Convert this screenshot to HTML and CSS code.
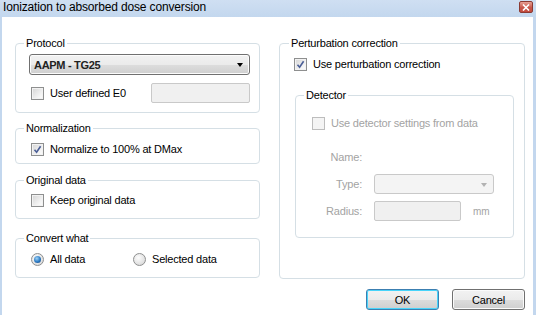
FILE: index.html
```html
<!DOCTYPE html>
<html>
<head>
<meta charset="utf-8">
<link rel="stylesheet" href="styles.css">
</head>
<body>
<div class="window">
  <header class="titlebar">
    <span class="title">Ionization to absorbed dose conversion</span>
    <span class="close"><svg width="8" height="7" viewBox="0 0 8 7"><path d="M1 0.5 L7 6.5 M7 0.5 L1 6.5" stroke="#fff" stroke-width="1.6"/></svg></span>
  </header>
  <main class="client">
    <div class="columns">
      <div class="col-left">
        <fieldset class="group g-protocol">
          <legend>Protocol</legend>
          <div class="gbody">
            <div class="combo"><span class="combo-text">AAPM - TG25</span><span class="arrow"></span></div>
            <div class="row e0-row">
              <label class="check"><span class="box"></span>User defined E0</label>
              <span class="textbox e0"></span>
            </div>
          </div>
        </fieldset>
        <fieldset class="group g-norm">
          <legend>Normalization</legend>
          <div class="gbody">
            <div class="row">
              <label class="check"><span class="box checked"><svg width="9" height="9" viewBox="0 0 9 9"><path d="M1.5 4.8 L3.6 7.2 L7.6 1.2" fill="none" stroke="#4a5e96" stroke-width="1.6"/></svg></span>Normalize to 100% at DMax</label>
            </div>
          </div>
        </fieldset>
        <fieldset class="group g-orig">
          <legend>Original data</legend>
          <div class="gbody">
            <div class="row">
              <label class="check"><span class="box"></span>Keep original data</label>
            </div>
          </div>
        </fieldset>
        <fieldset class="group g-convert">
          <legend>Convert what</legend>
          <div class="gbody">
            <div class="row radios">
              <label class="radio r-all"><span class="dot selected"></span>All data</label>
              <label class="radio"><span class="dot"></span>Selected data</label>
            </div>
          </div>
        </fieldset>
      </div>
      <div class="col-right">
        <fieldset class="group g-pert">
          <legend>Perturbation correction</legend>
          <div class="gbody">
            <div class="row">
              <label class="check"><span class="box checked"><svg width="9" height="9" viewBox="0 0 9 9"><path d="M1.5 4.8 L3.6 7.2 L7.6 1.2" fill="none" stroke="#4a5e96" stroke-width="1.6"/></svg></span>Use perturbation correction</label>
            </div>
            <fieldset class="group g-det">
              <legend>Detector</legend>
              <div class="gbody">
                <div class="row">
                  <label class="check disabled"><span class="box"></span>Use detector settings from data</label>
                </div>
                <div class="det-grid">
                  <span class="lbl">Name:</span><span></span>
                  <span class="lbl">Type:</span><span class="combo disabled type"><span class="arrow"></span></span>
                  <span class="lbl">Radius:</span><span class="radius-cell"><span class="textbox radius"></span><span class="unit">mm</span></span>
                </div>
              </div>
            </fieldset>
          </div>
        </fieldset>
      </div>
    </div>
    <div class="buttons">
      <button class="btn default">OK</button>
      <button class="btn">Cancel</button>
    </div>
  </main>
</div>
</body>
</html>
```
FILE: styles.css
```css
* { box-sizing: border-box; }
html, body { margin: 0; padding: 0; background: #fff; }
body {
  font-family: "Liberation Sans", Arial, sans-serif;
  font-size: 11px;
  letter-spacing: -0.2px;
  color: #000;
}
.window {
  width: 536px;
  height: 315px;
  display: flex;
  flex-direction: column;
  overflow: hidden;
}
.titlebar {
  height: 17px;
  flex: none;
  background: linear-gradient(#cfdff2, #c3d7ee);
  display: flex;
  align-items: flex-start;
  justify-content: space-between;
  padding: 0 3px 0 3px;
}
.title {
  font-size: 12px;
  letter-spacing: -0.15px;
  line-height: 15px;
  color: #000;
}
.close {
  margin-top: 1px;
  width: 14px;
  height: 12px;
  border: 1px solid #8b3a33;
  border-radius: 2px;
  background: linear-gradient(#e7a195, #c8584c 55%, #c24a3d);
  display: flex;
  align-items: center;
  justify-content: center;
}
.client {
  flex: 1;
  background: #fff;
  border-left: 2px solid #c3d7ee;
  border-right: 3px solid #c3d7ee;
  display: flex;
  flex-direction: column;
}
.columns {
  display: grid;
  grid-template-columns: 245px 246px;
  column-gap: 19px;
  padding: 19px 8px 0 13px;
}
.col-left { display: flex; flex-direction: column; }

.group {
  margin: 0;
  padding: 0;
  border: 1px solid #d5dfe5;
  border-radius: 4px;
  min-width: 0;
}
.group > legend {
  margin-left: 8px;
  padding: 0 2px;
  line-height: 14px;
  height: 14px;
}
.g-protocol { height: 77px; }
.g-protocol > .gbody { padding: 4px 9px 0 13px; }
.g-norm { height: 43px; margin-top: 8px; }
.g-norm > .gbody { padding: 6px 0 0 15px; }
.g-orig { height: 46px; margin-top: 9px; }
.g-orig > .gbody { padding: 5px 0 0 15px; }
.g-convert { height: 47px; margin-top: 12px; }
.g-convert > .gbody { padding: 6px 0 0 15px; }
.g-pert { height: 243px; }
.g-pert > legend { margin-left: 9px; }
.g-pert > .gbody { padding: 6px 10px 0 14px; }
.g-det { height: 150px; margin: 16px 0 0 1px; }
.g-det > .gbody { padding: 13px 0 0 16px; }

.row {
  display: flex;
  align-items: center;
  height: 16px;
}
.e0-row {
  height: 20px;
  margin-top: 8px;
  padding-left: 2px;
  justify-content: space-between;
}
.check, .radio {
  display: flex;
  align-items: center;
  gap: 6px;
  white-space: nowrap;
}
.box {
  width: 13px;
  height: 13px;
  border: 1px solid #8e8f8f;
  background: linear-gradient(135deg, #d4d4d4, #f4f4f4 70%, #fdfdfd);
  box-shadow: inset 0 0 0 1px #f2f2f2;
  display: flex;
  align-items: center;
  justify-content: center;
  flex: none;
}
.check.disabled { color: #a3a3a3; }
.check.disabled .box {
  border-color: #bdbdbd;
  background: #f4f4f4;
  box-shadow: none;
}
.radios { height: 16px; }
.r-all { width: 102px; }
.dot {
  width: 13px;
  height: 13px;
  border-radius: 50%;
  border: 1px solid #8e8f8f;
  background: radial-gradient(circle at 40% 35%, #fdfdfd, #e3e3e3 60%, #cfcfcf);
  display: flex;
  align-items: center;
  justify-content: center;
  flex: none;
}
.dot.selected::after {
  content: "";
  width: 7px;
  height: 7px;
  border-radius: 50%;
  background: radial-gradient(circle at 40% 35%, #9fd3f7, #2b7ac3 55%, #173f78);
}

.combo {
  position: relative;
  width: 221px;
  height: 21px;
  border: 1px solid #707070;
  border-radius: 3px;
  background: linear-gradient(#f2f2f2 0%, #ebebeb 50%, #dddddd 51%, #cfcfcf 100%);
  display: flex;
  align-items: center;
  padding-left: 4px;
  box-shadow: inset 0 0 0 1px #fcfcfc;
}
.combo-text { font-weight: bold; color: #222; letter-spacing: -0.3px; }
.arrow {
  position: absolute;
  right: 6px;
  top: 8px;
  width: 0;
  height: 0;
  border-left: 3.5px solid transparent;
  border-right: 3.5px solid transparent;
  border-top: 4px solid #000;
}
.combo.disabled {
  width: 120px;
  height: 20px;
  border-color: #c9c9c9;
  background: #f4f4f4;
  box-shadow: none;
}
.combo.disabled .arrow { border-top-color: #b2b2b2; top: 8px; }
.textbox {
  height: 20px;
  border: 1px solid #c9c9c9;
  border-radius: 2px;
  background: #f0f0f0;
}
.e0 { width: 99px; }
.radius { width: 87px; height: 20px; }

.det-grid {
  display: grid;
  grid-template-columns: 50px 130px;
  grid-template-rows: 20px 20px 20px;
  column-gap: 12px;
  row-gap: 7px;
  align-items: center;
  margin-top: 16px;
  color: #a3a3a3;
}
.lbl { text-align: right; }
.radius-cell { display: flex; align-items: center; gap: 12px; }
.unit { font-size: 10px; }

.buttons {
  display: flex;
  justify-content: flex-end;
  gap: 13px;
  padding: 10px 8px 0 0;
}
.btn {
  width: 73px;
  height: 21px;
  font: inherit;
  letter-spacing: inherit;
  color: #000;
  border: 1px solid #707070;
  border-radius: 3px;
  background: linear-gradient(#f2f2f2 0%, #ebebeb 50%, #dddddd 51%, #cfcfcf 100%);
  box-shadow: inset 0 0 0 1px #fbfbfb;
  padding: 0;
}
.btn.default {
  border-color: #3c7fb1;
  box-shadow: inset 0 0 0 1px #48d4fa;
}
```
